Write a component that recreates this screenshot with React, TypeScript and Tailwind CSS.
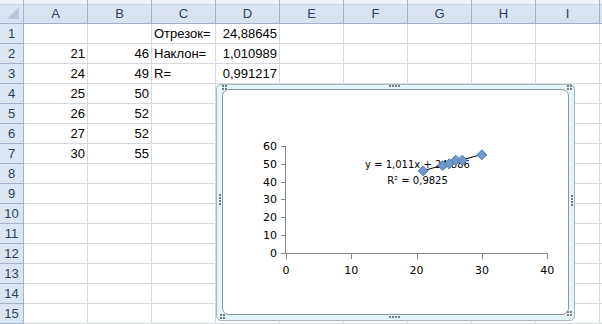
import React from "react";

const columns = ["A", "B", "C", "D", "E", "F", "G", "H", "I"];
const rowCount = 15;

type Cell = { text: string; align: "left" | "right" };

const cells: Record<string, Cell> = {
  C1: { text: "Отрезок=", align: "left" },
  D1: { text: "24,88645", align: "right" },
  A2: { text: "21", align: "right" },
  B2: { text: "46", align: "right" },
  C2: { text: "Наклон=", align: "left" },
  D2: { text: "1,010989", align: "right" },
  A3: { text: "24", align: "right" },
  B3: { text: "49", align: "right" },
  C3: { text: "R=", align: "left" },
  D3: { text: "0,991217", align: "right" },
  A4: { text: "25", align: "right" },
  B4: { text: "50", align: "right" },
  A5: { text: "26", align: "right" },
  B5: { text: "52", align: "right" },
  A6: { text: "27", align: "right" },
  B6: { text: "52", align: "right" },
  A7: { text: "30", align: "right" },
  B7: { text: "55", align: "right" },
};

const points: [number, number][] = [
  [21, 46],
  [24, 49],
  [25, 50],
  [26, 52],
  [27, 52],
  [30, 55],
];

const X = (v: number) => 286 + v * 6.53;
const Y = (v: number) => 253 - v * 1.785;

const headerBg =
  "bg-[linear-gradient(to_bottom,#eef3f9_0px,#eef3f9_4px,#c6d4e3_4px,#c6d4e3_5px,#dce6f2_5px,#d6e1ef_100%)]";

function Dots({ cols, rows, className }: { cols: number; rows: number; className: string }) {
  return (
    <div
      className={`absolute grid gap-[1px] ${className}`}
      style={{ gridTemplateColumns: `repeat(${cols}, 2px)`, gridTemplateRows: `repeat(${rows}, 2px)` }}
    >
      {Array.from({ length: cols * rows }).map((_, i) => (
        <span key={i} className="block h-[2px] w-[2px] bg-[#767c82]" />
      ))}
    </div>
  );
}

function Chart() {
  const yTicks = [0, 10, 20, 30, 40, 50, 60];
  const xTicks = [0, 10, 20, 30, 40];
  const font = "'DejaVu Sans', Verdana, sans-serif";

  return (
    <div className="absolute left-[216px] top-[84px] h-[237px] w-[359px] rounded-[5px] border border-[#a9b4bc] bg-[#e3f5f9]">
      <div className="absolute bottom-[5px] left-[5px] right-[5px] top-[4px] overflow-hidden rounded-[7px] border border-[#8e979e] bg-white">
        <svg width={345} height={224} viewBox="223 90 345 224" className="block">
          {/* y axis */}
          <line x1={285.5} y1={146} x2={285.5} y2={253.5} stroke="#868686" strokeWidth={1} />
          {yTicks.map((v) => (
            <g key={`y${v}`}>
              <line x1={281} x2={286} y1={Math.round(Y(v)) + 0.5} y2={Math.round(Y(v)) + 0.5} stroke="#868686" />
              <text x={277} y={Y(v) + 4} textAnchor="end" fontSize={11} fontFamily={font} fill="#000">
                {v}
              </text>
            </g>
          ))}
          {/* x axis */}
          <line x1={285.5} y1={253.5} x2={547.5} y2={253.5} stroke="#868686" strokeWidth={1} />
          {xTicks.map((v) => (
            <g key={`x${v}`}>
              <line x1={Math.round(X(v)) + 0.5} x2={Math.round(X(v)) + 0.5} y1={253} y2={259} stroke="#868686" />
              <text x={X(v)} y={274} textAnchor="middle" fontSize={11} fontFamily={font} fill="#000">
                {v}
              </text>
            </g>
          ))}
          {/* trendline label */}
          <text x={417.5} y={167.5} textAnchor="middle" fontSize={10} fontFamily={font} fill="#000">
            y = 1,011x + 24,886
          </text>
          <text x={417.5} y={183.5} textAnchor="middle" fontSize={10} fontFamily={font} fill="#000">
            R² = 0,9825
          </text>
          {/* trendline */}
          <line x1={X(21)} y1={Y(46.117)} x2={X(30)} y2={Y(55.216)} stroke="#000" strokeWidth={1} />
          {/* markers */}
          {points.map(([px, py], i) => {
            const cx = X(px);
            const cy = Y(py);
            return (
              <polygon
                key={i}
                points={`${cx},${cy - 5} ${cx + 5},${cy} ${cx},${cy + 5} ${cx - 5},${cy}`}
                fill="#7099cb"
                stroke="#4a7ebb"
                strokeWidth={1}
                strokeLinejoin="round"
              />
            );
          })}
        </svg>
      </div>

      <Dots cols={4} rows={1} className="left-[172px] top-[0px]" />
      <Dots cols={4} rows={1} className="left-[172px] top-[231px]" />
      <Dots cols={1} rows={4} className="left-[2px] top-[109px]" />
      <Dots cols={1} rows={4} className="left-[354px] top-[110px]" />
      <Dots cols={2} rows={2} className="left-[5px] top-[0px]" />
      <Dots cols={2} rows={2} className="left-[350px] top-[0px]" />
      <Dots cols={2} rows={2} className="left-[3px] top-[229px]" />
      <Dots cols={2} rows={2} className="left-[350px] top-[226px]" />
    </div>
  );
}

export default function App() {
  return (
    <div className="relative h-[324px] w-[602px] overflow-hidden bg-white font-['Liberation_Sans',Arial,sans-serif] text-[13px] leading-[15px] text-black">
      <div className="grid grid-cols-[24px_repeat(9,64px)_2px] grid-rows-[24px_repeat(15,20px)]">
        {/* corner */}
        <div className={`relative border-b border-r border-[#9eb3cb] ${headerBg}`}>
          <svg width={12} height={12} className="absolute left-[7px] top-[7px]">
            <polygon points="12,0 12,12 0,12" fill="#b4c6da" />
          </svg>
        </div>
        {columns.map((c) => (
          <div
            key={c}
            className={`flex items-end justify-center border-b border-r border-[#9eb3cb] pb-[2px] text-[#27415f] ${headerBg}`}
          >
            {c}
          </div>
        ))}
        <div className={`border-b border-[#9eb3cb] ${headerBg}`} />

        {Array.from({ length: rowCount }).map((_, r) => {
          const row = r + 1;
          return (
            <React.Fragment key={row}>
              <div className="flex items-end justify-center border-b border-r border-[#9eb3cb] bg-[#dce6f2] pb-[2px] text-[#27415f]">
                {row}
              </div>
              {columns.map((c) => {
                const cell = cells[`${c}${row}`];
                return (
                  <div
                    key={c}
                    className={`flex items-end whitespace-nowrap border-b border-r border-[#d5d9df] px-[2px] pb-[2px] ${
                      cell?.align === "right" ? "justify-end" : "justify-start"
                    }`}
                  >
                    {cell?.text ?? ""}
                  </div>
                );
              })}
              <div className="border-b border-[#d5d9df]" />
            </React.Fragment>
          );
        })}
      </div>

      <Chart />
    </div>
  );
}
